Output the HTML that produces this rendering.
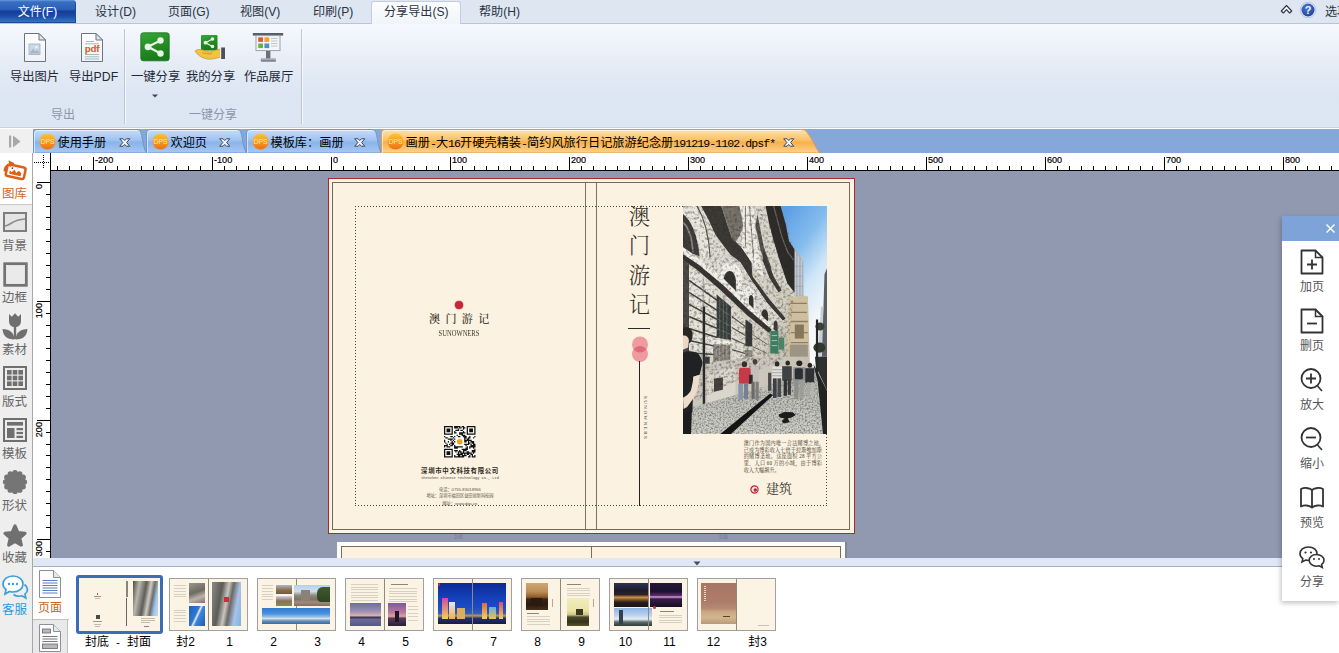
<!DOCTYPE html><html lang="zh"><head><meta charset="utf-8"><title>DPS</title><style>*{box-sizing:border-box;margin:0;padding:0}
html,body{width:1339px;height:653px;overflow:hidden;background:#fff}
body{position:relative;font-family:"Liberation Sans","Noto Sans CJK SC",sans-serif;font-size:12px;color:#1e2a3c}
.abs{position:absolute}
#menubar{position:absolute;left:0;top:0;width:1339px;height:24px;background:#dde6f1;border-bottom:1px solid #b9c4d4}
#filebtn{position:absolute;left:0;top:0;width:76px;height:23px;background:linear-gradient(#6a9ae0 0%,#3a70c4 8%,#2a5eb4 44%,#143e98 50%,#1a4aa4 72%,#3276c4 100%);border-radius:0 4px 0 0;border:1px solid #1c4a94;border-left:0;border-top:0;color:#fff;text-align:center;line-height:24px;font-size:12px}
.mi{position:absolute;top:0;height:23px;line-height:24.500px;font-size:12.1px;color:#2a3342;white-space:nowrap}
#acttab{position:absolute;left:371px;top:1px;width:90px;height:23px;background:linear-gradient(#fbfcfe,#f1f5fb);border:1px solid #c3cddc;border-bottom:0;border-radius:3px 3px 0 0}
#ribbon{position:absolute;left:0;top:24px;width:1339px;height:104px;background:linear-gradient(#f6f9fd 0%,#edf2fa 22%,#e1e9f4 50%,#dce5f2 72%,#dde6f3 100%);border-bottom:1px solid #c9d2e0}
.rsep{position:absolute;top:5px;width:1px;height:95px;background:#bcc5d3;box-shadow:1px 0 0 #f6f8fc}
.rlabel{position:absolute;font-size:12.3px;color:#1f2937;white-space:nowrap;line-height:14px}
.glabel{position:absolute;font-size:12px;color:#8b96a9;white-space:nowrap;line-height:14px}
#tabbar{position:absolute;left:0;top:129px;width:1339px;height:24px;background:#85a7d9}
#tabbar .lead{position:absolute;left:0;top:0;width:33px;height:24px;background:#f0f0f0}
.tab{position:absolute;top:0px;height:24px;font-size:12.2px;line-height:29px;color:#000;white-space:nowrap}
.tab svg.bg{position:absolute;left:0;top:0}
.tab .t{position:absolute;top:0px;left:24.500px}
.l{font-family:"Liberation Mono",monospace;font-size:11.500px;letter-spacing:-0.900px;position:relative;top:-0.5px}
#hruler{position:absolute;left:33px;top:153px;width:1306px;height:18px;background:#fff;overflow:hidden}
#hruler:after{content:'';position:absolute;left:17px;right:0;bottom:0;height:1px;background:#000}
#hruler .corner{position:absolute;left:0;top:0;width:18px;height:18px;border-right:1px solid #000}
#hruler i{position:absolute;bottom:1px;width:1px;background:#000}
#hruler i.m{height:4px}
#hruler i.M{height:13px}
#hruler b{position:absolute;top:1.5px;font-weight:normal;font-size:9.1px;line-height:10px;color:#000;-webkit-text-stroke:0.2px #000}
#vruler{position:absolute;left:33px;top:171px;width:18px;height:387px;background:#fff;border-right:1px solid #000;overflow:hidden}
#vruler i{position:absolute;right:0;height:1px;background:#000}
#vruler i.m{width:4px}
#vruler i.M{width:13px}
#vruler b{position:absolute;left:1px;font-weight:normal;font-size:9.1px;line-height:10px;color:#000;-webkit-text-stroke:0.2px #000;transform-origin:0 0;transform:rotate(-90deg) translate(-100%,0);white-space:nowrap}
#sidebar{position:absolute;left:0;top:153px;width:33px;height:500px;background:#eeeeee;border-right:1px solid #a8a8a8}
.sb{position:absolute;left:0;width:33px;height:52px}
.sb span{position:absolute;left:-1.500px;width:32px;text-align:center;font-size:12.5px;line-height:15px;color:#666;top:32px;letter-spacing:0}
.sb svg{position:absolute;left:2px;top:4px}
#canvas{position:absolute;left:51px;top:171px;width:1288px;height:387px;background:#9199b1;overflow:hidden}
#split{position:absolute;left:33px;top:558px;width:1306px;height:9px;background:#e0e8f7;border-bottom:1px solid #a9b0bb}
#bottom{position:absolute;left:33px;top:567px;width:1306px;height:86px;background:#fff}
.th{position:absolute;top:11px;width:79px;height:53px;background:#fbf3e4;border:1px solid #a0a0a0;overflow:hidden}
.thl{position:absolute;top:68px;font-size:12px;line-height:14px;color:#000;white-space:nowrap;transform:translateX(-50%)}
#panel{position:absolute;left:1282px;top:216px;width:57px;height:385px;background:#fff;box-shadow:-1px 2px 5px rgba(0,0,0,.25)}
#panel .hd{position:absolute;left:0;top:0;width:57px;height:24.500px;background:#7ea3d8}
.pi{position:absolute;left:1.500px;width:57px;text-align:center;font-size:12px;line-height:14px;color:#555}
.serif{font-family:"Liberation Serif","Noto Serif CJK SC",serif}
</style></head><body>
<div id="menubar">
<div id="filebtn">文件(F)</div>
<div class="mi" style="left:95px">设计(D)</div>
<div class="mi" style="left:168px">页面(G)</div>
<div class="mi" style="left:240px">视图(V)</div>
<div class="mi" style="left:313px">印刷(P)</div>
<div id="acttab"></div>
<div class="mi" style="left:384px">分享导出(S)</div>
<div class="mi" style="left:479px">帮助(H)</div>
<svg class="abs" style="left:1280px;top:4px" width="13" height="11" viewBox="0 0 13 11"><path d="M1.300 7 L6.500 1.500 L11.700 7 L9.700 9 L6.500 5.600 L3.300 9 Z" fill="#fff" stroke="#2e3444" stroke-width="1.100" stroke-linejoin="round"/></svg>
<svg class="abs" style="left:1299px;top:1px" width="18" height="18" viewBox="0 0 18 18"><defs><radialGradient id="hg" cx="0.400" cy="0.300" r="0.800"><stop offset="0" stop-color="#4a78cc"/><stop offset="1" stop-color="#1e3f96"/></radialGradient></defs><circle cx="9" cy="9" r="7.800" fill="#dfe8f6" stroke="#9db2d6" stroke-width="0.600"/><circle cx="9" cy="9" r="6.500" fill="url(#hg)"/><text x="9" y="13" font-size="11" font-weight="bold" fill="#eef4ff" text-anchor="middle" font-family="Liberation Sans, sans-serif">?</text></svg>
<div class="mi" style="left:1325px">选项</div>
</div>
<div id="ribbon">
<div class="rsep" style="left:124px"></div>
<div class="rsep" style="left:301px"></div>
<div class="rlabel" style="left:10px;top:46px">导出图片</div>
<div class="rlabel" style="left:69px;top:46px">导出PDF</div>
<div class="rlabel" style="left:131px;top:46px">一键分享</div>
<div class="rlabel" style="left:186px;top:46px">我的分享</div>
<div class="rlabel" style="left:244px;top:46px">作品展厅</div>
<svg class="abs" style="left:151px;top:69px" width="8" height="6"><path d="M1 1.5 H7 L4 4.5 Z" fill="#444"/></svg>
<div class="glabel" style="left:51px;top:84px">导出</div>
<div class="glabel" style="left:189px;top:84px">一键分享</div>
<svg class="abs" style="left:23px;top:8px" width="24" height="31" viewBox="0 0 24 31"><defs><linearGradient id="pg1" x1="0" y1="0" x2="0" y2="1"><stop offset="0" stop-color="#ffffff"/><stop offset="1" stop-color="#eef1f6"/></linearGradient></defs><path d="M1.500 1.500 H16 L22.500 8 V29.500 H1.500 Z" fill="url(#pg1)" stroke="#6d7580" stroke-width="1"/><path d="M16 1.500 V8 H22.500 Z" fill="#dfe7ef" stroke="#6d7580" stroke-width="1" stroke-linejoin="round"/><rect x="6" y="12" width="11" height="10.500" fill="#c9d9e6" stroke="#9fb0c0" stroke-width="0.800"/><path d="M6.500 21.500 L10 16.500 L12.500 19.500 L14.500 17.500 L16.500 21.500 Z" fill="#a6b8c6"/><circle cx="13.500" cy="15" r="1.200" fill="#eef4f8"/></svg>
<svg class="abs" style="left:80px;top:8px" width="24" height="31" viewBox="0 0 24 31"><path d="M1.500 1.500 H16 L22.500 8 V29.500 H1.500 Z" fill="url(#pg1)" stroke="#6d7580" stroke-width="1"/><path d="M16 1.500 V8 H22.500 Z" fill="#dfe7ef" stroke="#6d7580" stroke-width="1" stroke-linejoin="round"/><path d="M6 9.500 H14 M5 11.800 H19 M5 22.500 H19 M5 24.800 H19 M5 27 H19" stroke="#9db4b8" stroke-width="0.900"/><text x="12" y="20.300" font-family="Liberation Sans, sans-serif" font-weight="bold" font-size="9.800" fill="#e2531c" text-anchor="middle" letter-spacing="-0.200">pdf</text></svg>
<svg class="abs" style="left:140px;top:8px" width="30" height="30" viewBox="0 0 30 30"><defs><linearGradient id="gg1" x1="0" y1="0" x2="0.300" y2="1"><stop offset="0" stop-color="#38a838"/><stop offset="0.500" stop-color="#259025"/><stop offset="1" stop-color="#1b7a1b"/></linearGradient></defs><rect x="0.800" y="0.800" width="28.400" height="28" rx="2.500" fill="url(#gg1)" stroke="#1a6e1a" stroke-width="0.800"/><path d="M8 14.800 L20.500 8.500 M8 14.800 L20.500 21.500" stroke="#e6f4e6" stroke-width="2.200"/><circle cx="8" cy="14.800" r="3.400" fill="#e6f4e6"/><circle cx="20.500" cy="8.500" r="3.200" fill="#e6f4e6"/><circle cx="20.500" cy="21.500" r="3.200" fill="#e6f4e6"/></svg>
<svg class="abs" style="left:194px;top:10px" width="32" height="28" viewBox="0 0 32 28"><rect x="7" y="1" width="16.500" height="15.500" rx="1" fill="url(#gg1)"/><path d="M11.500 8.700 L18.500 5 M11.500 8.700 L18.500 12.500" stroke="#e6f4e6" stroke-width="1.300"/><circle cx="11.500" cy="8.700" r="1.900" fill="#e6f4e6"/><circle cx="18.500" cy="5" r="1.800" fill="#e6f4e6"/><circle cx="18.500" cy="12.500" r="1.800" fill="#e6f4e6"/><path d="M1 17 C3 15 7 15 10 16.500 L16 18 C19 17 23 15.500 27 15 V23 C22 24.500 17 25.500 13 25 C8 24 3 21 1 17 Z" fill="#f2c243" stroke="#c9952a" stroke-width="0.700"/><path d="M8 19 C11 19.500 15 20 18 19.500" stroke="#e39a1c" stroke-width="1.200" fill="none"/><rect x="27" y="13.500" width="4" height="11.500" fill="#4c4f58"/><rect x="26" y="14" width="1.200" height="10.500" fill="#e8e8ee"/></svg>
<svg class="abs" style="left:252px;top:8px" width="32" height="31" viewBox="0 0 32 31"><rect x="0.800" y="1" width="30.400" height="2.600" fill="#5a5f68"/><rect x="4" y="3.600" width="24" height="15" fill="#f4f6f9" stroke="#9aa0aa" stroke-width="1"/><rect x="6.200" y="5.300" width="4.800" height="4.600" fill="#d0603a"/><rect x="12.400" y="5.300" width="4.800" height="4.600" fill="#f0a030"/><rect x="6.200" y="11.500" width="4.800" height="4.600" fill="#6ab04a"/><rect x="12.400" y="11.500" width="4.800" height="4.600" fill="#4a90d8"/><path d="M19 6.500 H25.500 M19 9 H25.500 M19 11.500 H25.500 M19 14 H25.500" stroke="#b9c0ca" stroke-width="0.900"/><rect x="14" y="19" width="4.400" height="8" fill="#6a6f78"/><rect x="8.800" y="26.500" width="15.200" height="3.200" rx="1" fill="#7d828c"/><rect x="8.800" y="26.500" width="15.200" height="1.200" fill="#b9bec8"/></svg>

</div>

<div id="tabbar"><div class="lead"><svg class="abs" style="left:8px;top:6px" width="14" height="13" viewBox="0 0 14 13"><rect x="1" y="0.5" width="2.2" height="12" fill="#a8a8a8"/><path d="M5 0.5 L12.5 6.5 L5 12.5 Z" fill="#a8a8a8"/></svg></div><div class="tab" style="left:33px;width:114px"><svg class="bg" width="114" height="24"><defs><linearGradient id="tg1" x1="0" y1="0" x2="0" y2="1"><stop offset="0" stop-color="#c9defa"/><stop offset="0.45" stop-color="#9fc2f0"/><stop offset="0.55" stop-color="#8bb4ea"/><stop offset="1" stop-color="#a8c8f1"/></linearGradient></defs><path d="M0.5 24 V4 Q0.5 0.5 4 0.5 H105 C110 0.5 109 18 113.5 24 Z" fill="url(#tg1)" stroke="#6f96cf" stroke-width="1"/><path d="M1.5 24 V4.5 Q1.5 1.5 4.5 1.5 H104" fill="none" stroke="rgba(255,255,255,.55)" stroke-width="1"/></svg><svg class="abs" style="left:5.500px;top:4px" width="17" height="17" viewBox="0 0 17 17"><defs><linearGradient id="dg1" x1="0" y1="0" x2="0" y2="1"><stop offset="0" stop-color="#f9c733"/><stop offset="0.5" stop-color="#f59a22"/><stop offset="1" stop-color="#ee6f14"/></linearGradient></defs><circle cx="8.5" cy="8.5" r="8" fill="url(#dg1)"/><text x="8.5" y="10.6" font-size="6.8" fill="#ffeaa0" text-anchor="middle" font-family="Liberation Sans, sans-serif">DPS</text></svg><span class="t">使用手册</span><svg class="abs" style="left:86px;top:8.500px" width="11.500" height="9" viewBox="0 0 13 10"><path d="M0.800 0.800 H4.600 L6.500 2.800 L8.400 0.800 H12.200 L8.600 5 L12.200 9.200 H8.400 L6.500 7.200 L4.600 9.200 H0.800 L4.400 5 Z" fill="#f2f6fc" stroke="#34435e" stroke-width="1.100" stroke-linejoin="round"/></svg></div><div class="tab" style="left:146px;width:101px"><svg class="bg" width="101" height="24"><defs><linearGradient id="tg2" x1="0" y1="0" x2="0" y2="1"><stop offset="0" stop-color="#c9defa"/><stop offset="0.45" stop-color="#9fc2f0"/><stop offset="0.55" stop-color="#8bb4ea"/><stop offset="1" stop-color="#a8c8f1"/></linearGradient></defs><path d="M0.5 24 V4 Q0.5 0.5 4 0.5 H92 C97 0.5 96 18 100.5 24 Z" fill="url(#tg2)" stroke="#6f96cf" stroke-width="1"/><path d="M1.5 24 V4.5 Q1.5 1.5 4.5 1.5 H91" fill="none" stroke="rgba(255,255,255,.55)" stroke-width="1"/></svg><svg class="abs" style="left:5.500px;top:4px" width="17" height="17" viewBox="0 0 17 17"><defs><linearGradient id="dg2" x1="0" y1="0" x2="0" y2="1"><stop offset="0" stop-color="#f9c733"/><stop offset="0.5" stop-color="#f59a22"/><stop offset="1" stop-color="#ee6f14"/></linearGradient></defs><circle cx="8.5" cy="8.5" r="8" fill="url(#dg2)"/><text x="8.5" y="10.6" font-size="6.8" fill="#ffeaa0" text-anchor="middle" font-family="Liberation Sans, sans-serif">DPS</text></svg><span class="t">欢迎页</span><svg class="abs" style="left:73px;top:8.500px" width="11.500" height="9" viewBox="0 0 13 10"><path d="M0.800 0.800 H4.600 L6.500 2.800 L8.400 0.800 H12.200 L8.600 5 L12.200 9.200 H8.400 L6.500 7.200 L4.600 9.200 H0.800 L4.400 5 Z" fill="#f2f6fc" stroke="#34435e" stroke-width="1.100" stroke-linejoin="round"/></svg></div><div class="tab" style="left:246px;width:136px"><svg class="bg" width="136" height="24"><defs><linearGradient id="tg3" x1="0" y1="0" x2="0" y2="1"><stop offset="0" stop-color="#c9defa"/><stop offset="0.45" stop-color="#9fc2f0"/><stop offset="0.55" stop-color="#8bb4ea"/><stop offset="1" stop-color="#a8c8f1"/></linearGradient></defs><path d="M0.5 24 V4 Q0.5 0.5 4 0.5 H127 C132 0.5 131 18 135.5 24 Z" fill="url(#tg3)" stroke="#6f96cf" stroke-width="1"/><path d="M1.5 24 V4.5 Q1.5 1.5 4.5 1.5 H126" fill="none" stroke="rgba(255,255,255,.55)" stroke-width="1"/></svg><svg class="abs" style="left:5.500px;top:4px" width="17" height="17" viewBox="0 0 17 17"><defs><linearGradient id="dg3" x1="0" y1="0" x2="0" y2="1"><stop offset="0" stop-color="#f9c733"/><stop offset="0.5" stop-color="#f59a22"/><stop offset="1" stop-color="#ee6f14"/></linearGradient></defs><circle cx="8.5" cy="8.5" r="8" fill="url(#dg3)"/><text x="8.5" y="10.6" font-size="6.8" fill="#ffeaa0" text-anchor="middle" font-family="Liberation Sans, sans-serif">DPS</text></svg><span class="t">模板库：画册</span><svg class="abs" style="left:108px;top:8.500px" width="11.500" height="9" viewBox="0 0 13 10"><path d="M0.800 0.800 H4.600 L6.500 2.800 L8.400 0.800 H12.200 L8.600 5 L12.200 9.200 H8.400 L6.500 7.200 L4.600 9.200 H0.800 L4.400 5 Z" fill="#f2f6fc" stroke="#34435e" stroke-width="1.100" stroke-linejoin="round"/></svg></div><div class="tab" style="left:381px;width:439px"><svg class="bg" width="439" height="24"><defs><linearGradient id="tg4" x1="0" y1="0" x2="0" y2="1"><stop offset="0" stop-color="#fde2b4"/><stop offset="0.45" stop-color="#fbc068"/><stop offset="0.55" stop-color="#f9b04a"/><stop offset="1" stop-color="#fcd290"/></linearGradient></defs><path d="M0.5 24 V4 Q0.5 0.5 4 0.5 H422 C427 0.5 434 18 438.5 24 Z" fill="url(#tg4)" stroke="#d9a050" stroke-width="1"/><path d="M1.5 24 V4.5 Q1.5 1.5 4.5 1.5 H421" fill="none" stroke="rgba(255,255,255,.55)" stroke-width="1"/></svg><svg class="abs" style="left:5.500px;top:4px" width="17" height="17" viewBox="0 0 17 17"><defs><linearGradient id="dg4" x1="0" y1="0" x2="0" y2="1"><stop offset="0" stop-color="#f9c733"/><stop offset="0.5" stop-color="#f59a22"/><stop offset="1" stop-color="#ee6f14"/></linearGradient></defs><circle cx="8.5" cy="8.5" r="8" fill="url(#dg4)"/><text x="8.5" y="10.6" font-size="6.8" fill="#ffeaa0" text-anchor="middle" font-family="Liberation Sans, sans-serif">DPS</text></svg><span class="t">画册<span class="l">-</span>大<span class="l">16</span>开硬壳精装<span class="l">-</span>简约风旅行日记旅游纪念册<span class="l">191219-1102.dpsf*</span></span><svg class="abs" style="left:402px;top:8.500px" width="11.500" height="9" viewBox="0 0 13 10"><path d="M0.800 0.800 H4.600 L6.500 2.800 L8.400 0.800 H12.200 L8.600 5 L12.200 9.200 H8.400 L6.500 7.200 L4.600 9.200 H0.800 L4.400 5 Z" fill="#f2f6fc" stroke="#34435e" stroke-width="1.100" stroke-linejoin="round"/></svg></div></div>
<div id="hruler">
<div class="corner"><svg width="17" height="17"><path d="M1 9.5 H16 M10.5 2 V16" stroke="#000" stroke-width="1" stroke-dasharray="1 1" fill="none"/></svg></div>
<i class="m" style="left:24.3px"></i><i class="m" style="left:36.2px"></i><i class="m" style="left:48.1px"></i><i class="M" style="left:60.0px"></i><b style="left:62.0px">-200</b><i class="m" style="left:71.9px"></i><i class="m" style="left:83.8px"></i><i class="m" style="left:95.7px"></i><i class="m" style="left:107.6px"></i><i class="m" style="left:119.5px"></i><i class="m" style="left:131.4px"></i><i class="m" style="left:143.3px"></i><i class="m" style="left:155.2px"></i><i class="m" style="left:167.1px"></i><i class="M" style="left:179.0px"></i><b style="left:181.0px">-100</b><i class="m" style="left:190.9px"></i><i class="m" style="left:202.8px"></i><i class="m" style="left:214.7px"></i><i class="m" style="left:226.6px"></i><i class="m" style="left:238.5px"></i><i class="m" style="left:250.4px"></i><i class="m" style="left:262.3px"></i><i class="m" style="left:274.2px"></i><i class="m" style="left:286.1px"></i><i class="M" style="left:298.0px"></i><b style="left:300.0px">0</b><i class="m" style="left:309.9px"></i><i class="m" style="left:321.8px"></i><i class="m" style="left:333.7px"></i><i class="m" style="left:345.6px"></i><i class="m" style="left:357.5px"></i><i class="m" style="left:369.4px"></i><i class="m" style="left:381.3px"></i><i class="m" style="left:393.2px"></i><i class="m" style="left:405.1px"></i><i class="M" style="left:417.0px"></i><b style="left:419.0px">100</b><i class="m" style="left:428.9px"></i><i class="m" style="left:440.8px"></i><i class="m" style="left:452.7px"></i><i class="m" style="left:464.6px"></i><i class="m" style="left:476.5px"></i><i class="m" style="left:488.4px"></i><i class="m" style="left:500.3px"></i><i class="m" style="left:512.2px"></i><i class="m" style="left:524.1px"></i><i class="M" style="left:536.0px"></i><b style="left:538.0px">200</b><i class="m" style="left:547.9px"></i><i class="m" style="left:559.8px"></i><i class="m" style="left:571.7px"></i><i class="m" style="left:583.6px"></i><i class="m" style="left:595.5px"></i><i class="m" style="left:607.4px"></i><i class="m" style="left:619.3px"></i><i class="m" style="left:631.2px"></i><i class="m" style="left:643.1px"></i><i class="M" style="left:655.0px"></i><b style="left:657.0px">300</b><i class="m" style="left:666.9px"></i><i class="m" style="left:678.8px"></i><i class="m" style="left:690.7px"></i><i class="m" style="left:702.6px"></i><i class="m" style="left:714.5px"></i><i class="m" style="left:726.4px"></i><i class="m" style="left:738.3px"></i><i class="m" style="left:750.2px"></i><i class="m" style="left:762.1px"></i><i class="M" style="left:774.0px"></i><b style="left:776.0px">400</b><i class="m" style="left:785.9px"></i><i class="m" style="left:797.8px"></i><i class="m" style="left:809.7px"></i><i class="m" style="left:821.6px"></i><i class="m" style="left:833.5px"></i><i class="m" style="left:845.4px"></i><i class="m" style="left:857.3px"></i><i class="m" style="left:869.2px"></i><i class="m" style="left:881.1px"></i><i class="M" style="left:893.0px"></i><b style="left:895.0px">500</b><i class="m" style="left:904.9px"></i><i class="m" style="left:916.8px"></i><i class="m" style="left:928.7px"></i><i class="m" style="left:940.6px"></i><i class="m" style="left:952.5px"></i><i class="m" style="left:964.4px"></i><i class="m" style="left:976.3px"></i><i class="m" style="left:988.2px"></i><i class="m" style="left:1000.1px"></i><i class="M" style="left:1012.0px"></i><b style="left:1014.0px">600</b><i class="m" style="left:1023.9px"></i><i class="m" style="left:1035.8px"></i><i class="m" style="left:1047.7px"></i><i class="m" style="left:1059.6px"></i><i class="m" style="left:1071.5px"></i><i class="m" style="left:1083.4px"></i><i class="m" style="left:1095.3px"></i><i class="m" style="left:1107.2px"></i><i class="m" style="left:1119.1px"></i><i class="M" style="left:1131.0px"></i><b style="left:1133.0px">700</b><i class="m" style="left:1142.9px"></i><i class="m" style="left:1154.8px"></i><i class="m" style="left:1166.7px"></i><i class="m" style="left:1178.6px"></i><i class="m" style="left:1190.5px"></i><i class="m" style="left:1202.4px"></i><i class="m" style="left:1214.3px"></i><i class="m" style="left:1226.2px"></i><i class="m" style="left:1238.1px"></i><i class="M" style="left:1250.0px"></i><b style="left:1252.0px">800</b><i class="m" style="left:1261.9px"></i><i class="m" style="left:1273.8px"></i><i class="m" style="left:1285.7px"></i><i class="m" style="left:1297.6px"></i>
</div>
<div id="vruler">
<i class="M" style="top:10.7px"></i><b style="top:12.7px">0</b><i class="m" style="top:22.6px"></i><i class="m" style="top:34.5px"></i><i class="m" style="top:46.4px"></i><i class="m" style="top:58.3px"></i><i class="m" style="top:70.2px"></i><i class="m" style="top:82.1px"></i><i class="m" style="top:94.0px"></i><i class="m" style="top:105.9px"></i><i class="m" style="top:117.8px"></i><i class="M" style="top:129.7px"></i><b style="top:131.7px">100</b><i class="m" style="top:141.6px"></i><i class="m" style="top:153.5px"></i><i class="m" style="top:165.4px"></i><i class="m" style="top:177.3px"></i><i class="m" style="top:189.2px"></i><i class="m" style="top:201.1px"></i><i class="m" style="top:213.0px"></i><i class="m" style="top:224.9px"></i><i class="m" style="top:236.8px"></i><i class="M" style="top:248.7px"></i><b style="top:250.7px">200</b><i class="m" style="top:260.6px"></i><i class="m" style="top:272.5px"></i><i class="m" style="top:284.4px"></i><i class="m" style="top:296.3px"></i><i class="m" style="top:308.2px"></i><i class="m" style="top:320.1px"></i><i class="m" style="top:332.0px"></i><i class="m" style="top:343.9px"></i><i class="m" style="top:355.8px"></i><i class="M" style="top:367.7px"></i><b style="top:369.7px">300</b><i class="m" style="top:379.6px"></i>
</div>
<div id="sidebar">
<div class="sb" style="top:0;height:52px;width:32px;background:#fff;border-bottom:1px solid #c8c8c8">
<svg width="30" height="26" viewBox="0 0 30 26" style="left:1px;top:4px"><g transform="rotate(12 14.500 14.500)"><rect x="5.500" y="8.800" width="18.500" height="11.800" rx="2.200" fill="#fff" stroke="#dd5f18" stroke-width="2.500"/><path d="M8.800 18 V14.500 L11 16 L13.200 12.800 L15.400 15.800 L17.600 13 L20.500 15 V18 Z" fill="#dd5f18"/><circle cx="10.800" cy="11.800" r="0.900" fill="#7a3a14"/></g><path d="M3.800 14.500 C3.500 10.500 5.500 8.200 9 7.300" fill="none" stroke="#dd5f18" stroke-width="2.300"/><path d="M7.500 3.300 L13.600 6.300 L8.800 10.600 Z" fill="#dd5f18"/></svg>
<span style="color:#d9621e;top:34px">图库</span></div>
<div class="sb" style="top:52px">
<svg width="24" height="20" viewBox="0 0 24 20" style="left:3px;top:7px"><rect x="1" y="1" width="22" height="18" fill="#e4e4e4" stroke="#7d7d7d" stroke-width="2"/><path d="M2 14 C8 13.5 9 7.5 22 7" fill="none" stroke="#8a8a8a" stroke-width="1.6"/></svg>
<span style="top:34px">背景</span></div>
<div class="sb" style="top:104px">
<svg width="25" height="25" viewBox="0 0 25 25" style="left:2.500px;top:4.500px"><rect x="1.700" y="1.700" width="21.600" height="21.600" fill="#eaeaea" stroke="#737373" stroke-width="2.800"/><rect x="3.600" y="3.600" width="17.800" height="17.800" fill="none" stroke="#eaeaea" stroke-width="1.200" stroke-dasharray="1.200 1.600"/></svg>
<span style="top:34px">边框</span></div>
<div class="sb" style="top:156px">
<svg width="26" height="28" viewBox="0 0 26 28" style="left:2px;top:3px"><path d="M7 2 L9.800 4.800 L13 1.200 L16.200 4.800 L19 2 V9 C19 13 16.500 15 13 15 C9.500 15 7 13 7 9 Z" fill="#6f6f6f"/><rect x="11.800" y="14" width="2.400" height="13" fill="#6f6f6f"/><path d="M12.500 27.500 C4.500 27.500 1 23.500 0.500 17 C7.500 17 12 20.500 12.500 27.500 Z" fill="#6f6f6f"/><path d="M13.500 27.500 C21.500 27.500 25 23.500 25.500 17 C18.500 17 14 20.500 13.500 27.500 Z" fill="#6f6f6f"/></svg>
<span style="top:34px">素材</span></div>
<div class="sb" style="top:208px">
<svg width="24" height="24" viewBox="0 0 24 24" style="left:3px;top:4.500px"><rect x="1" y="1" width="22" height="22" fill="#ececec" stroke="#6f6f6f" stroke-width="2"/><g fill="#6f6f6f"><rect x="4" y="4" width="4.6" height="4.6"/><rect x="9.700" y="4" width="4.6" height="4.6"/><rect x="15.400" y="4" width="4.6" height="4.6"/><rect x="4" y="9.700" width="4.6" height="4.6"/><rect x="9.700" y="9.700" width="4.6" height="4.6"/><rect x="15.400" y="9.700" width="4.6" height="4.6"/><rect x="4" y="15.400" width="4.6" height="4.6"/><rect x="9.700" y="15.400" width="4.600" height="4.6"/><rect x="15.400" y="15.400" width="4.6" height="4.6"/></g></svg>
<span style="top:34px">版式</span></div>
<div class="sb" style="top:260px">
<svg width="24" height="24" viewBox="0 0 24 24" style="left:3px;top:5px"><rect x="1" y="1" width="22" height="22" fill="#ececec" stroke="#6f6f6f" stroke-width="2"/><g fill="#6f6f6f"><rect x="4" y="4" width="16" height="3.6"/><rect x="4" y="10" width="7.5" height="10"/><rect x="13.500" y="10" width="6.5" height="2.2"/><rect x="13.500" y="13.900" width="6.5" height="2.2"/><rect x="13.500" y="17.800" width="6.5" height="2.2"/></g></svg>
<span style="top:34px">模板</span></div>
<div class="sb" style="top:312px">
<svg width="26" height="26" viewBox="0 0 26 26" style="left:2px;top:4px"><g fill="#757575"><circle cx="13" cy="13" r="10.400"/><circle cx="22.40" cy="13.00" r="2.700"/><circle cx="21.14" cy="17.70" r="2.700"/><circle cx="17.70" cy="21.14" r="2.700"/><circle cx="13.00" cy="22.40" r="2.700"/><circle cx="8.30" cy="21.14" r="2.700"/><circle cx="4.86" cy="17.70" r="2.700"/><circle cx="3.60" cy="13.00" r="2.700"/><circle cx="4.86" cy="8.30" r="2.700"/><circle cx="8.30" cy="4.86" r="2.700"/><circle cx="13.00" cy="3.60" r="2.700"/><circle cx="17.70" cy="4.86" r="2.700"/><circle cx="21.14" cy="8.30" r="2.700"/></g></svg>
<span style="top:34px">形状</span></div>
<div class="sb" style="top:364px">
<svg width="26" height="25" viewBox="0 0 26 25" style="left:2px;top:6px"><path d="M13 3 L15.900 9.600 L23 10.300 L17.700 15 L19.300 22 L13 18.300 L6.700 22 L8.300 15 L3 10.300 L10.100 9.600 Z" fill="#707070" stroke="#707070" stroke-width="3.200" stroke-linejoin="round"/></svg>
<span style="top:34px">收藏</span></div>
<div class="sb" style="top:416px">
<svg width="28" height="26" viewBox="0 0 28 26" style="left:1px;top:4.500px"><path d="M12 2 C18 2 22 5.500 22 10 C22 14.500 18 18 12 18 C10.800 18 9.600 17.800 8.500 17.500 L4 20 L5 15.500 C3 14 2 12 2 10 C2 5.500 6 2 12 2 Z" fill="#fff" stroke="#3c9fd6" stroke-width="1.7"/><path d="M23.500 10.500 C25.500 12 26.500 13.800 26.500 15.500 C26.500 17.500 25.500 19 24 20.200 L24.800 24 L21 21.800 C18.500 22.500 15 22.300 12.500 20.500" fill="none" stroke="#3c9fd6" stroke-width="1.7"/><circle cx="8" cy="10" r="1.2" fill="#3c9fd6"/><circle cx="12" cy="10" r="1.2" fill="#3c9fd6"/><circle cx="16" cy="10" r="1.2" fill="#3c9fd6"/></svg>
<span style="color:#2d9ad6;top:34px">客服</span></div>
</div>

<div id="canvas">
<div id="page" class="abs" style="left:277px;top:7px;width:527px;height:356px;background:#fdf4e4;border:1px solid #a92c29">
<div class="abs" style="left:3px;top:3px;width:518px;height:348px;border:1px solid #6f6a5c;background:#fcf2e1"></div>
<div class="abs" style="left:256px;top:4px;width:12px;height:346px;border-left:1px solid #77726a;border-right:1px solid #77726a"></div>
<svg class="abs" style="left:25px;top:26px" width="476" height="303"><path d="M1 1.500 H473 M1 300.500 H473 M1.500 1 V301 M472.500 1 V301" fill="none" stroke="#454545" stroke-width="1" stroke-dasharray="1 2"/></svg>
<!-- back cover -->
<div class="abs" style="left:126px;top:121.500px;width:8px;height:8px;border-radius:50%;background:#c8243a;box-shadow:0 0 0 0.6px #e48a93"></div>
<div class="abs serif" style="left:100px;top:132px;width:62px;text-align:center;font-size:11px;letter-spacing:5.4px;line-height:16px;color:#2c2820;font-weight:500;white-space:nowrap">澳门游记</div>
<div class="abs" style="left:88.500px;top:150px;width:82px;text-align:center;font-family:'Liberation Serif',serif;font-size:8.2px;line-height:10px;color:#3c372d;transform:scaleX(0.8)">SUNOWNERS</div>
<svg class="abs" style="left:115px;top:247px" width="31.500" height="31.500" viewBox="0 0 32 32"><rect width="32" height="32" fill="#fffdf8"/><path d="M0.00 0.00h8.96v1.28h-8.96zM10.24 0.00h6.40v1.28h-6.40zM17.92 0.00h2.56v1.28h-2.56zM23.04 0.00h8.96v1.28h-8.96zM0.00 1.28h1.28v1.28h-1.28zM7.68 1.28h1.28v1.28h-1.28zM10.24 1.28h3.84v1.28h-3.84zM15.36 1.28h2.56v1.28h-2.56zM19.20 1.28h2.56v1.28h-2.56zM23.04 1.28h1.28v1.28h-1.28zM30.72 1.28h1.28v1.28h-1.28zM0.00 2.56h1.28v1.28h-1.28zM2.56 2.56h3.84v1.28h-3.84zM7.68 2.56h1.28v1.28h-1.28zM14.08 2.56h1.28v1.28h-1.28zM19.20 2.56h1.28v1.28h-1.28zM23.04 2.56h1.28v1.28h-1.28zM25.60 2.56h3.84v1.28h-3.84zM30.72 2.56h1.28v1.28h-1.28zM0.00 3.84h1.28v1.28h-1.28zM2.56 3.84h3.84v1.28h-3.84zM7.68 3.84h1.28v1.28h-1.28zM11.52 3.84h3.84v1.28h-3.84zM16.64 3.84h2.56v1.28h-2.56zM23.04 3.84h1.28v1.28h-1.28zM25.60 3.84h3.84v1.28h-3.84zM30.72 3.84h1.28v1.28h-1.28zM0.00 5.12h1.28v1.28h-1.28zM2.56 5.12h3.84v1.28h-3.84zM7.68 5.12h1.28v1.28h-1.28zM10.24 5.12h1.28v1.28h-1.28zM19.20 5.12h1.28v1.28h-1.28zM23.04 5.12h1.28v1.28h-1.28zM25.60 5.12h3.84v1.28h-3.84zM30.72 5.12h1.28v1.28h-1.28zM0.00 6.40h1.28v1.28h-1.28zM7.68 6.40h1.28v1.28h-1.28zM10.24 6.40h2.56v1.28h-2.56zM15.36 6.40h6.40v1.28h-6.40zM23.04 6.40h1.28v1.28h-1.28zM30.72 6.40h1.28v1.28h-1.28zM0.00 7.68h8.96v1.28h-8.96zM15.36 7.68h3.84v1.28h-3.84zM23.04 7.68h8.96v1.28h-8.96zM12.80 8.96h1.28v1.28h-1.28zM17.92 8.96h3.84v1.28h-3.84zM0.00 10.24h1.28v1.28h-1.28zM6.40 10.24h2.56v1.28h-2.56zM10.24 10.24h1.28v1.28h-1.28zM14.08 10.24h2.56v1.28h-2.56zM19.20 10.24h3.84v1.28h-3.84zM25.60 10.24h1.28v1.28h-1.28zM30.72 10.24h1.28v1.28h-1.28zM1.28 11.52h2.56v1.28h-2.56zM8.96 11.52h1.28v1.28h-1.28zM20.48 11.52h2.56v1.28h-2.56zM24.32 11.52h2.56v1.28h-2.56zM29.44 11.52h1.28v1.28h-1.28zM3.84 12.80h5.12v1.28h-5.12zM10.24 12.80h1.28v1.28h-1.28zM20.48 12.80h1.28v1.28h-1.28zM23.04 12.80h2.56v1.28h-2.56zM0.00 14.08h1.28v1.28h-1.28zM6.40 14.08h1.28v1.28h-1.28zM8.96 14.08h1.28v1.28h-1.28zM20.48 14.08h7.68v1.28h-7.68zM0.00 15.36h1.28v1.28h-1.28zM3.84 15.36h1.28v1.28h-1.28zM7.68 15.36h1.28v1.28h-1.28zM10.24 15.36h1.28v1.28h-1.28zM20.48 15.36h2.56v1.28h-2.56zM24.32 15.36h1.28v1.28h-1.28zM26.88 15.36h3.84v1.28h-3.84zM1.28 16.64h1.28v1.28h-1.28zM6.40 16.64h3.84v1.28h-3.84zM24.32 16.64h2.56v1.28h-2.56zM28.16 16.64h2.56v1.28h-2.56zM2.56 17.92h1.28v1.28h-1.28zM5.12 17.92h1.28v1.28h-1.28zM7.68 17.92h2.56v1.28h-2.56zM20.48 17.92h5.12v1.28h-5.12zM26.88 17.92h1.28v1.28h-1.28zM29.44 17.92h2.56v1.28h-2.56zM0.00 19.20h3.84v1.28h-3.84zM6.40 19.20h2.56v1.28h-2.56zM10.24 19.20h1.28v1.28h-1.28zM21.76 19.20h1.28v1.28h-1.28zM26.88 19.20h5.12v1.28h-5.12zM0.00 20.48h1.28v1.28h-1.28zM2.56 20.48h3.84v1.28h-3.84zM10.24 20.48h8.96v1.28h-8.96zM23.04 20.48h1.28v1.28h-1.28zM25.60 20.48h6.40v1.28h-6.40zM10.24 21.76h3.84v1.28h-3.84zM21.76 21.76h2.56v1.28h-2.56zM25.60 21.76h1.28v1.28h-1.28zM29.44 21.76h1.28v1.28h-1.28zM0.00 23.04h8.96v1.28h-8.96zM17.92 23.04h6.40v1.28h-6.40zM30.72 23.04h1.28v1.28h-1.28zM0.00 24.32h1.28v1.28h-1.28zM7.68 24.32h1.28v1.28h-1.28zM10.24 24.32h3.84v1.28h-3.84zM15.36 24.32h1.28v1.28h-1.28zM19.20 24.32h3.84v1.28h-3.84zM28.16 24.32h3.84v1.28h-3.84zM0.00 25.60h1.28v1.28h-1.28zM2.56 25.60h3.84v1.28h-3.84zM7.68 25.60h1.28v1.28h-1.28zM11.52 25.60h1.28v1.28h-1.28zM14.08 25.60h3.84v1.28h-3.84zM19.20 25.60h1.28v1.28h-1.28zM23.04 25.60h2.56v1.28h-2.56zM28.16 25.60h3.84v1.28h-3.84zM0.00 26.88h1.28v1.28h-1.28zM2.56 26.88h3.84v1.28h-3.84zM7.68 26.88h1.28v1.28h-1.28zM14.08 26.88h1.28v1.28h-1.28zM16.64 26.88h11.52v1.28h-11.52zM29.44 26.88h1.28v1.28h-1.28zM0.00 28.16h1.28v1.28h-1.28zM2.56 28.16h3.84v1.28h-3.84zM7.68 28.16h1.28v1.28h-1.28zM12.80 28.16h6.40v1.28h-6.40zM20.48 28.16h1.28v1.28h-1.28zM23.04 28.16h2.56v1.28h-2.56zM26.88 28.16h2.56v1.28h-2.56zM0.00 29.44h1.28v1.28h-1.28zM7.68 29.44h1.28v1.28h-1.28zM10.24 29.44h1.28v1.28h-1.28zM14.08 29.44h2.56v1.28h-2.56zM17.92 29.44h5.12v1.28h-5.12zM25.60 29.44h1.28v1.28h-1.28zM28.16 29.44h1.28v1.28h-1.28zM30.72 29.44h1.28v1.28h-1.28zM0.00 30.72h8.96v1.28h-8.96zM10.24 30.72h10.24v1.28h-10.24zM24.32 30.72h2.56v1.28h-2.56zM28.16 30.72h3.84v1.28h-3.84z" fill="#111"/><circle cx="16" cy="16" r="2.800" fill="#f0a020"/></svg>
<div class="abs" style="left:81px;top:287px;width:100px;text-align:center;font-size:6.4px;font-weight:bold;line-height:9px;color:#2e2a22;letter-spacing:0.680px;white-space:nowrap">深圳市中文科技有限公司</div>
<div class="abs" style="left:81px;top:296px;width:100px;text-align:center;font-family:'Liberation Mono',monospace;font-size:3.6px;line-height:6px;color:#4a4438;white-space:nowrap">Shenzhen Chinese Technology Co., Ltd</div>
<div class="abs" style="left:81px;top:307.500px;width:100px;text-align:center;font-size:4.2px;line-height:6px;color:#5a5448;white-space:nowrap">电话：0755-83018966</div>
<div class="abs" style="left:81px;top:314px;width:100px;text-align:center;font-size:4.2px;line-height:6px;color:#5a5448;white-space:nowrap">地址：深圳市福田区益田创新科技园</div>
<div class="abs" style="left:81px;top:321.500px;width:100px;text-align:center;font-size:4.2px;line-height:6px;color:#5a5448;white-space:nowrap">网址：www.dps.cn</div>
<!-- front cover -->
<div class="abs serif" style="left:298.500px;top:24px;width:24px;text-align:center;font-size:21.300px;font-weight:300;line-height:29.400px;color:#2e2a24">澳<br>门<br>游<br>记</div>
<div class="abs" style="left:299px;top:149px;width:22px;height:1px;background:#2a2a2a"></div>
<svg class="abs" style="left:300.500px;top:155.500px" width="20" height="30" viewBox="0 0 20 30"><circle cx="10" cy="9.500" r="8" fill="#ee9a9f"/><circle cx="10" cy="19" r="8" fill="#ee9a9f"/><path d="M3.600 14.250 A8 8 0 0 1 16.400 14.250 A8 8 0 0 1 3.600 14.250 Z" fill="#e0697a"/></svg>
<div class="abs" style="left:310px;top:182px;width:1px;height:145px;background:#262320"></div>
<div class="abs" style="left:312px;top:216.500px;width:8px;height:46px"><div style="position:absolute;left:0;top:0;transform-origin:0 0;transform:rotate(90deg) translate(0,-100%);font-family:'Liberation Serif',serif;font-size:4.900px;line-height:8px;letter-spacing:1.550px;color:#3a362e;white-space:nowrap">SUNOWNERS</div></div>
<svg class="abs" style="left:354px;top:27px" width="144" height="228" viewBox="0 0 143 227" preserveAspectRatio="none">
<defs>
<linearGradient id="sky" x1="0.200" y1="0" x2="0.600" y2="1"><stop offset="0" stop-color="#5e9fe4"/><stop offset="0.300" stop-color="#84bcee"/><stop offset="0.550" stop-color="#cfe6f7"/><stop offset="0.800" stop-color="#f2f7fa"/><stop offset="1" stop-color="#f8fafa"/></linearGradient>
<linearGradient id="stone" x1="0" y1="0" x2="1" y2="0.700"><stop offset="0" stop-color="#e4e1d8"/><stop offset="0.600" stop-color="#d6d2c6"/><stop offset="1" stop-color="#bdb7aa"/></linearGradient>
<linearGradient id="pave" x1="0" y1="0" x2="0" y2="1"><stop offset="0" stop-color="#b4b4ae"/><stop offset="1" stop-color="#d0d0ca"/></linearGradient>
<filter id="grain2" x="0" y="0" width="1" height="1"><feTurbulence type="fractalNoise" baseFrequency="0.600" numOctaves="2" seed="8" result="n"/><feColorMatrix in="n" type="matrix" values="0 0 0 0 0  0 0 0 0 0  0 0 0 0 0  1.500 0 0 0 -0.600" result="a"/><feComposite in="SourceGraphic" in2="a" operator="in"/></filter>
<filter id="grain" x="0" y="0" width="1" height="1"><feTurbulence type="fractalNoise" baseFrequency="0.350" numOctaves="3" seed="5" result="n"/><feColorMatrix in="n" type="matrix" values="0 0 0 0 0  0 0 0 0 0  0 0 0 0 0  2.200 0 0 0 -1" result="a"/><feComposite in="SourceGraphic" in2="a" operator="in"/></filter>
<clipPath id="pc"><rect width="143" height="227"/></clipPath>
</defs>
<g clip-path="url(#pc)">
<rect width="143" height="227" fill="url(#stone)"/>
<!-- sky -->
<path d="M97 0 H143 V160 H126 L124.600 113 L124 90 L119.600 89 L119 52 L110.700 43 L105.400 35 L102 18 Z" fill="url(#sky)"/>
<!-- glass tower -->
<path d="M108 38 L117 50 L119.600 56 V90 H109 Z" fill="#aab3bd"/>
<path d="M111.500 46 V89 M114.500 50 V89 M117.500 54 V89" stroke="#d3dae1" stroke-width="0.700"/>
<path d="M109 60 H119 M109 70 H119 M109 80 H119" stroke="#8c96a2" stroke-width="0.500"/>
<!-- distant beige building -->
<path d="M105 90 H124 L125.500 150 H103 Z" fill="#cdbf9f"/>
<path d="M107 97 H123 M107 106 H123 M107 115 H124 M107 126 H124 M107 136 H124" stroke="#8e7f63" stroke-width="1.300"/>
<rect x="111" y="118" width="9" height="14" fill="#85765c"/>
<rect x="106" y="138" width="18" height="12" fill="#9c9484"/>
<!-- right dark building + tree + plants -->
<path d="M143 62 L140.500 68 L139.500 100 L138 128 L137 150 L143 150 Z" fill="#5a5e66"/>
<path d="M137 100 L139.500 100 L138 150 L134 150 Z" fill="#c9cdd2"/>
<ellipse cx="135.500" cy="141" rx="6" ry="5" fill="#2f3a2c"/>
<ellipse cx="136" cy="120" rx="4.500" ry="4" fill="#3a403a"/>
<path d="M131 150 H143 V184 L132 160 Z" fill="#2d302f"/>
<!-- dark under-cornice band 1 -->
<path d="M18 0 H38 L48.500 32 L58 41 L68 56 L69 70 L86 93 L102 112 L99 114 L84 97 L68 74 L57 56 L47 48.500 L32.500 29 L25 13 Z" fill="#3c3a37"/>
<path d="M38 0 H58 L62 14 L56 30 L52 36 L48.500 32 Z" fill="#77736b"/>
<!-- pilasters light -->
<path d="M56 0 H70 L74 40 L80 70 L74 66 L68 56 L58 41 L60 20 Z" fill="#efede6"/>
<path d="M62 0 V40 M66 0 L70 50" stroke="#8a867d" stroke-width="1"/>
<path d="M70 0 H82 L85 15 L89 32 L96 56 L104 77 L110.700 86 V92 L100 80 L92 64 L84 40 L76 20 Z" fill="#d9d6cc"/>
<path d="M74 8 L80 40 L88 62 L84 64 L77 44 L72 20 Z" fill="#55534f"/>
<path d="M80 44 L90 70 L98 84 L95 86 L86 72 L79 54 Z" fill="#3f3d3a"/>
<!-- roof cornice black -->
<path d="M82 0 H97 L102 18 L105.400 35 L110.700 43 V86 L103.600 77 L96.500 56 L89.400 32.500 L85 15 Z" fill="#2e2c2a"/>
<path d="M90 0 L98 30 L104 46 L110 54" stroke="#6b675f" stroke-width="1.200" fill="none"/>
<!-- left arch -->
<path d="M0 0 H14 C22 14 26 30 27 52 L17 50 C15 32 10 18 0 8 Z" fill="#e9e6de"/>
<path d="M0 8 C8 14 14 28 16.500 50 L8 47 L0 41 Z" fill="#403e3c"/>
<path d="M0 16 C6 22 9 32 10 46" stroke="#8d8a84" stroke-width="1.600" fill="none"/>
<path d="M14 0 C22 14 26 30 27 52" stroke="#5a5853" stroke-width="1.200" fill="none"/>
<!-- facade mid (between band1 & ledge) -->
<path d="M27 52 L32 30 L47 48.500 L57 56 L68 74 L84 97 L99 114 L90 120 L68 100 L41 75 Z" fill="#dedbd2"/>
<!-- arch window 1 with surround -->
<path d="M36 70 C38 54 52 52 58 66 L60 90 L54 86 L53 72 C50 62 43 62 41 72 Z" fill="#f3f1eb"/>
<path d="M40 74 C42 61 51 62 52.500 74 L52.500 86 L40 78 Z" fill="#353432"/>
<path d="M60 86 C62 78 68 78 71 86 L72 104 L65 100 Z" fill="#f0eee8"/>
<path d="M65.400 92 C66.500 87 69.500 88 70 93 V104 L65.400 100 Z" fill="#353432"/>
<path d="M78 106 C80 101 84 103 84.500 108 V118 L78 113 Z" fill="#353432"/>
<path d="M90 116 C91.500 113 94 114 94 118 V126 L90 123 Z" fill="#3f3d3a"/>
<!-- lower ledge -->
<path d="M0 41 L16 52 L41 73 L68 100 L90 120 L88 123 L66 104 L40 79 L15 58 L0 48 Z" fill="#f2f0ea"/>
<path d="M0 48 L15 58 L40 79 L66 104 L88 123 L86 127 L64 109 L38 84.500 L14 63.500 L0 54 Z" fill="#383633"/>
<!-- far left dark strip -->
<path d="M0 54 L6 58 V150 L0 150 Z" fill="#4b4a48"/>
<!-- rusticated blocks -->
<path d="M6 62 L34 84 V150 L6 160 Z" fill="#e6e3da"/>
<path d="M6 74 L34 94 M6 86 L34 104 M6 98 L34 113 M6 110 L34 122 M6 122 L34 131 M6 134 L34 140 M6 146 L34 148" stroke="#46433f" stroke-width="1.500"/>
<path d="M20 72 V160 " stroke="#8c8982" stroke-width="0.800"/>
<!-- windows with grills -->
<path d="M33.400 88 L47.600 100 V133.400 L33.400 131 Z" fill="#39403d"/>
<path d="M36.500 91 V131 M40 94 V132 M43.500 97 V133 M33.400 100 L47.600 110 M33.400 112 L47.600 120 M33.400 122 L47.600 128" stroke="#7f8782" stroke-width="0.600"/>
<path d="M30 133 L49 135 V138 L30 137 Z" fill="#f0eee8"/>
<path d="M30 137.500 L46.800 139 V155.600 L30 157 Z" fill="#86837b"/>
<path d="M33 138 V157 M36.500 138 V157 M40 138.500 V156.500 M43.500 139 V156" stroke="#b9b6ad" stroke-width="0.600"/>
<!-- column blocks between windows -->
<path d="M48.500 100 L62 112 V165 L48.500 170 Z" fill="#e0ddd3"/>
<path d="M48.500 110 L62 120 M48.500 121 L62 129 M48.500 132 L62 138 M48.500 143 L62 147 M48.500 154 L62 156" stroke="#5a5752" stroke-width="1.100"/>
<path d="M62 113 L69 118 V140 L62 139.600 Z" fill="#383b39"/>
<path d="M61.500 143 L69 143.500 V152 L61.500 152 Z" fill="#8f8c84"/>
<path d="M69 116 L84 128 V160 L69 165 Z" fill="#d5d1c6"/>
<path d="M69 128 L84 138 M69 140 L84 147 M69 152 L84 155" stroke="#6a6761" stroke-width="0.900"/>
<path d="M84 126 L103 126 V160 L84 166 Z" fill="#c2bdb0"/>
<!-- building base -->
<path d="M6 158 L103 146 V176 L20 204 L6 204 Z" fill="#cbc7bc"/>
<path d="M24 166 L52 160 V188 L24 198 Z" fill="#dad6cc"/>
<path d="M30.800 172 L39.600 170.500 V183 L30.800 185 Z" fill="#45433f"/>
<!-- facade grain -->
<path d="M0 0 H97 L110 43 V90 L104 150 L0 200 Z" fill="#24231f" filter="url(#grain)" opacity="0.550"/>
<!-- lamp post -->
<rect x="19.600" y="100" width="2.400" height="102" fill="#2a2a2a"/>
<path d="M21 150 h5.500 v7 h-5.500 z" fill="#3a3a3a"/>
<!-- green sign -->
<rect x="86.700" y="124.500" width="8" height="22.300" fill="#3d7c60"/>
<rect x="95" y="131" width="5.500" height="12" fill="#4a8468"/>
<path d="M88 129 H93.500 M88 134 H93.500 M88 139 H93.500" stroke="#b8d8c8" stroke-width="0.800"/>
<!-- pavement -->
<path d="M0 206 L9 200 L50 189 L86 178 L120 168 L132 160 L143 184 V227 H0 Z" fill="url(#pave)"/>
<path d="M0 206 L9 200 L50 189 L86 178 L120 168 L132 160 L143 184 V227 H0 Z" fill="#4e4e48" filter="url(#grain2)"/>
<!-- black stripe -->
<path d="M37 227 L47.600 227 L89.400 188.500 L86.700 186.700 Z" fill="#141414"/>
<!-- bird shadow -->
<path d="M95 207.500 L101 205 L109 205.300 L112 208 L108 210.500 L104 211.500 L106 215 L100 216.500 L98 214 L101 211.500 L96 210.500 Z" fill="#1c1c1c"/>
<!-- fence right -->
<path d="M129.400 157 L143 184 V227 H139 L133.800 175 Z" fill="#222423"/>
<rect x="132" y="113" width="2.200" height="53" fill="#252626"/>
<!-- crowd -->
<g>
<ellipse cx="61" cy="157.500" rx="2.700" ry="2.900" fill="#3a2f2a"/><path d="M55.600 163 Q55.600 161 58 161 H65 Q67.200 161 67.200 163 V177 H55.600 Z" fill="#c63a47"/><rect x="55" y="177" width="4.500" height="16" fill="#8a94a6"/><rect x="60.500" y="177" width="4.200" height="15" fill="#768091"/>
<ellipse cx="71.500" cy="155" rx="2.300" ry="2.700" fill="#4a3d36"/><path d="M67.500 160 H75.200 V176 H67.500 Z" fill="#c4bfba"/><rect x="65.600" y="168" width="3.600" height="9" fill="#2c2c2e"/><rect x="68" y="175" width="3.200" height="17" fill="#6a6a6a"/><rect x="72" y="175" width="3.200" height="18" fill="#7c7c7a"/>
<rect x="78.500" y="158" width="6" height="26" fill="#c9c6bd" opacity="0.800"/>
<rect x="84.500" y="166" width="3.200" height="18" fill="#4a4a4a"/>
<ellipse cx="93.400" cy="157.200" rx="2.300" ry="2.600" fill="#2e2a28"/><path d="M88.500 160 H98.300 V172 H88.500 Z" fill="#e2e0dc"/><path d="M88.500 163 H98.300 M88.500 166 H98.300 M88.500 169 H98.300" stroke="#8e8e92" stroke-width="0.700"/><rect x="89.400" y="171.600" width="3.600" height="19.500" fill="#3e3f43"/><rect x="93.800" y="171.600" width="3.600" height="18.500" fill="#4a4b50"/>
<ellipse cx="104" cy="156.200" rx="2.300" ry="2.500" fill="#2a2624"/><path d="M98.500 159.500 H108 V174 H98.500 Z" fill="#404144"/><rect x="100" y="173" width="3.200" height="16" fill="#2f3033"/><rect x="104" y="173" width="3.200" height="15" fill="#3a3b3e"/>
<ellipse cx="115.500" cy="156.500" rx="3" ry="2.800" fill="#25221f"/><path d="M109.500 160.500 H121.400 V174 H109.500 Z" fill="#8b8d8f"/><rect x="111" y="161.500" width="8" height="11" rx="1.500" fill="#2c2e31"/><rect x="110.500" y="173.500" width="4.200" height="18.500" fill="#8f8f8a"/><rect x="115.600" y="173.500" width="4.200" height="17.500" fill="#9c9c98"/>
<ellipse cx="126" cy="158.500" rx="2.300" ry="2.500" fill="#262320"/><path d="M121.400 161.500 H130.300 V176 H121.400 Z" fill="#2f3134"/><rect x="123" y="175.500" width="3" height="15" fill="#a9a9a4"/><rect x="126.800" y="175.500" width="3" height="14.500" fill="#b4b4b0"/>
</g>
<!-- left man -->
<path d="M0 121 C5 119 9.400 122 9.600 128 C9.400 133 8 136 6 137 L0 132 Z" fill="#2a2623"/>
<path d="M0 129 C3 128.500 5.500 130 5.900 134 L5 141 L0 143 Z" fill="#ead7c6"/>
<path d="M0 146 C6 143.500 12 144.500 14.800 146.800 C18 150 19.500 154 19.200 157.400 L16.500 168 L10.300 170 L9.400 205.400 L0 205.400 Z" fill="#202122"/>
<path d="M10.300 170 L16.500 168 C16 176 15 180 13.900 184 C11 191 7.500 196 4.100 200 L0.500 202 L0 191 C3.500 189 6 187 7.700 184 C9 179 10 175 10.300 170 Z" fill="#eddccb"/>
<path d="M0 205 L8.800 204.500 L8 227 H0 Z" fill="#1b1c1e"/>
</g>
</svg>

<div class="abs serif" style="left:414.700px;top:261px;width:80.5px;height:6.800px;font-size:5.150px;line-height:6.800px;color:#3f3a30;white-space:nowrap;text-align:justify;text-align-last:justify;">澳门作为国内唯一合法赌博之地，</div><div class="abs serif" style="left:414.700px;top:268px;width:78.3px;height:6.800px;font-size:5.150px;line-height:6.800px;color:#3f3a30;white-space:nowrap;text-align:justify;text-align-last:justify;">已成为博彩收入七倍于拉斯维加斯</div><div class="abs serif" style="left:414.700px;top:274px;width:78.3px;height:6.800px;font-size:5.150px;line-height:6.800px;color:#3f3a30;white-space:nowrap;text-align:justify;text-align-last:justify;">的赌博圣地。这座面积 28 平方公</div><div class="abs serif" style="left:414.700px;top:281px;width:78.3px;height:6.800px;font-size:5.150px;line-height:6.800px;color:#3f3a30;white-space:nowrap;text-align:justify;text-align-last:justify;">里、人口 60 万的小城，由于博彩</div><div class="abs serif" style="left:414.700px;top:288px;width:78.3px;height:6.800px;font-size:5.150px;line-height:6.800px;color:#3f3a30;white-space:nowrap;">收入大幅飙升。</div>
<svg class="abs" style="left:421px;top:306px" width="9" height="9" viewBox="0 0 9 9"><circle cx="4.500" cy="4.500" r="3.600" fill="#f7e6dc" stroke="#c2213a" stroke-width="1.200"/><circle cx="5.300" cy="5" r="1.700" fill="#c2213a"/></svg>
<div class="abs serif" style="left:437px;top:301.500px;font-size:13px;line-height:16px;color:#3a362e;white-space:nowrap">建筑</div>
</div>
<!-- page labels -->
<div class="abs" style="left:403px;top:362.500px;font-size:4.500px;line-height:6px;color:#6e7890;white-space:nowrap">封底</div>
<div class="abs" style="left:668px;top:362.500px;font-size:4.500px;line-height:6px;color:#6e7890;white-space:nowrap">封面</div>
<!-- second page -->
<div class="abs" style="left:286px;top:371px;width:508px;height:20px;background:#fffdf8;box-shadow:2px 0 0 #7f8595">
<div class="abs" style="left:4px;top:3.500px;width:500px;height:20px;border:1px solid #77705f;background:#fdf2df"></div>
<div class="abs" style="left:253.500px;top:4px;width:1px;height:20px;background:#77705f"></div>
</div>
</div>

<div id="split"><svg class="abs" style="left:660px;top:3px" width="8" height="5"><path d="M0.5 0.5 H7.5 L4 4.5 Z" fill="#4a4f5a"/></svg></div><div id="bottom"><div class="abs" style="left:0;top:0;width:35px;height:86px;background:#e9e9e9;border-right:1px solid #c2c2c2"></div><div class="abs" style="left:0;top:0;width:36px;height:53px;background:#fff;border-bottom:1px solid #c2c2c2"></div><svg class="abs" style="left:6px;top:3px" width="22" height="28" viewBox="0 0 22 28"><path d="M0.5 0.5 H14.5 L21.5 7.5 V27.5 H0.5 Z" fill="#fdfdfd" stroke="#8a8f98" stroke-width="1"/><path d="M14.5 0.5 V7.5 H21.5" fill="#e4e7ec" stroke="#8a8f98" stroke-width="1"/><path d="M3.500 10.500 H18.500 M3.500 13 H18.500 M3.500 15.500 H18.500 M3.500 18 H18.500 M3.500 20.500 H18.500 M3.500 23 H18.500" stroke="#5c7fc0" stroke-width="1.100"/></svg><div class="abs" style="left:-0.500px;top:34px;width:35px;text-align:center;font-size:12px;line-height:14px;color:#c8641e">页面</div><svg class="abs" style="left:6px;top:57px" width="22" height="28" viewBox="0 0 22 28"><path d="M0.5 0.5 H14.5 L21.5 7.5 V27.5 H0.5 Z" fill="#fdfdfd" stroke="#8a8f98" stroke-width="1"/><path d="M14.5 0.5 V7.5 H21.5" fill="#e4e7ec" stroke="#8a8f98" stroke-width="1"/><rect x="3.500" y="5" width="8" height="4" fill="#b8b8b8" stroke="#666" stroke-width="0.800"/><path d="M3.500 12.500 H18.500 M3.500 15 H18.500 M3.500 17.500 H18.500" stroke="#777" stroke-width="1.100"/><rect x="3.500" y="20" width="15" height="4.500" fill="#b8b8b8" stroke="#666" stroke-width="0.800"/></svg><div class="abs" style="left:43px;top:8px;width:87px;height:59px;border:3px solid #3b6cba;border-radius:3px;background:#fbf3e4;overflow:hidden"><i style="position:absolute;left:66.5%;top:5.0%;width:30.5%;height:66.0%;background:linear-gradient(100deg,#4a4845 0%,#b9b6ae 22%,#5f5d59 45%,#cfcbc2 60%,#6e6c68 72%,#9cc2ea 84%,#c5dcf2 100%);"></i><i style="position:absolute;left:57.5%;top:6.0%;width:2.6%;height:30.0%;background:#8a857c;"></i><i style="position:absolute;left:58.6%;top:38.0%;width:0.7%;height:52.0%;background:#6a655e;"></i><i style="position:absolute;left:19.0%;top:34.0%;width:8.0%;height:2.2%;background:#9a9386;"></i><i style="position:absolute;left:22.2%;top:29.0%;width:1.8%;height:3.0%;background:#c8243a;border-radius:50%"></i><i style="position:absolute;left:20.0%;top:38.0%;width:6.0%;height:1.2%;background:#c2bbae;"></i><i style="position:absolute;left:20.5%;top:70.0%;width:5.0%;height:8.0%;background:#4a4a46;"></i><i style="position:absolute;left:17.0%;top:81.0%;width:12.0%;height:1.8%;background:#9a9386;"></i><i style="position:absolute;left:18.5%;top:86.0%;width:9.0%;height:1.2%;background:#c2bbae;"></i><i style="position:absolute;left:19.5%;top:90.0%;width:7.0%;height:1.2%;background:#c2bbae;"></i><i style="position:absolute;left:76.0%;top:75.0%;width:18.0%;height:1.4%;background:#c2bbae;"></i><i style="position:absolute;left:76.0%;top:79.0%;width:18.0%;height:1.4%;background:#c2bbae;"></i><i style="position:absolute;left:76.0%;top:83.0%;width:12.0%;height:1.4%;background:#c2bbae;"></i><i style="position:absolute;left:80.0%;top:90.0%;width:7.0%;height:3.0%;background:#8a8376;"></i></div><div class="thl" style="left:85px;top:68px;font-size:12px">封底<span class="l" style="font-size:10px;letter-spacing:0;white-space:pre"> - </span>封面</div><div class="th" style="left:136px"><i style="position:absolute;left:49.6%;top:0.0%;width:0.9%;height:100.0%;background:#8f8a80;"></i><i style="position:absolute;left:5.0%;top:12.0%;width:16.0%;height:1.6%;background:#d8d1c3;"></i><i style="position:absolute;left:5.0%;top:17.5%;width:16.0%;height:1.6%;background:#d8d1c3;"></i><i style="position:absolute;left:5.0%;top:23.0%;width:16.0%;height:1.6%;background:#d8d1c3;"></i><i style="position:absolute;left:5.0%;top:28.5%;width:16.0%;height:1.6%;background:#d8d1c3;"></i><i style="position:absolute;left:5.0%;top:34.0%;width:16.0%;height:1.6%;background:#d8d1c3;"></i><i style="position:absolute;left:5.0%;top:60.0%;width:16.0%;height:1.6%;background:#d8d1c3;"></i><i style="position:absolute;left:5.0%;top:65.5%;width:16.0%;height:1.6%;background:#d8d1c3;"></i><i style="position:absolute;left:5.0%;top:71.0%;width:16.0%;height:1.6%;background:#d8d1c3;"></i><i style="position:absolute;left:5.0%;top:76.5%;width:16.0%;height:1.6%;background:#d8d1c3;"></i><i style="position:absolute;left:5.0%;top:82.0%;width:16.0%;height:1.6%;background:#d8d1c3;"></i><i style="position:absolute;left:24.5%;top:7.0%;width:20.5%;height:40.0%;background:linear-gradient(160deg,#9a958c 0%,#6e6a63 45%,#b9b4aa 70%,#7c7469 100%);"></i><i style="position:absolute;left:24.5%;top:52.0%;width:20.5%;height:40.0%;background:linear-gradient(115deg,#1f5fb8 0%,#2f78d2 42%,#e8eef6 50%,#3d86da 58%,#1c5ab4 100%);"></i><i style="position:absolute;left:55.0%;top:6.0%;width:37.5%;height:87.0%;background:linear-gradient(100deg,#8d8a84 0%,#5d5b57 30%,#c9c6bf 48%,#6a6864 60%,#a6c4e6 78%,#7fb0e6 100%);"></i><i style="position:absolute;left:70.0%;top:36.0%;width:6.0%;height:9.0%;background:#d6283a;"></i></div><div class="thl" style="left:152.5px">封2</div><div class="thl" style="left:196.5px">1</div><div class="th" style="left:224px"><i style="position:absolute;left:49.6%;top:0.0%;width:0.9%;height:100.0%;background:#8f8a80;"></i><i style="position:absolute;left:5.0%;top:12.0%;width:15.0%;height:1.6%;background:#d8d1c3;"></i><i style="position:absolute;left:5.0%;top:17.5%;width:15.0%;height:1.6%;background:#d8d1c3;"></i><i style="position:absolute;left:5.0%;top:23.0%;width:15.0%;height:1.6%;background:#d8d1c3;"></i><i style="position:absolute;left:5.0%;top:28.5%;width:15.0%;height:1.6%;background:#d8d1c3;"></i><i style="position:absolute;left:5.0%;top:34.0%;width:15.0%;height:1.6%;background:#d8d1c3;"></i><i style="position:absolute;left:5.0%;top:39.5%;width:15.0%;height:1.6%;background:#d8d1c3;"></i><i style="position:absolute;left:24.0%;top:11.0%;width:20.5%;height:19.0%;background:linear-gradient(#a9b8c9,#8c6f4e 55%,#6e5a43);"></i><i style="position:absolute;left:24.0%;top:33.0%;width:20.5%;height:19.0%;background:linear-gradient(#c8d6e6,#8f6e56 50%,#7d8f5a);"></i><i style="position:absolute;left:46.6%;top:11.0%;width:47.4%;height:42.5%;background:linear-gradient(#b4d0ee 0%,#cfdfee 30%,#8f887c 50%,#7a7468 68%,#a08a7c 82%,#8a6a5a 100%);"></i><i style="position:absolute;left:76.0%;top:16.0%;width:18.0%;height:30.0%;background:linear-gradient(#3f5a2c,#2c4420);border-radius:40% 0 0 30%"></i><i style="position:absolute;left:56.0%;top:22.0%;width:12.0%;height:22.0%;background:#8a8278;"></i><i style="position:absolute;left:4.6%;top:56.6%;width:89.4%;height:31.0%;background:linear-gradient(#2f7ad2 0%,#4a90da 35%,#8fbde8 55%,#d9e2ea 66%,#8aa2ba 76%,#4a7eb4 88%,#3a6ea6 100%);"></i></div><div class="thl" style="left:240.5px">2</div><div class="thl" style="left:284.5px">3</div><div class="th" style="left:312px"><i style="position:absolute;left:49.6%;top:0.0%;width:0.9%;height:100.0%;background:#8f8a80;"></i><i style="position:absolute;left:6.0%;top:10.0%;width:36.0%;height:1.6%;background:#d8d1c3;"></i><i style="position:absolute;left:6.0%;top:15.2%;width:36.0%;height:1.6%;background:#d8d1c3;"></i><i style="position:absolute;left:6.0%;top:20.4%;width:36.0%;height:1.6%;background:#d8d1c3;"></i><i style="position:absolute;left:6.0%;top:25.6%;width:36.0%;height:1.6%;background:#d8d1c3;"></i><i style="position:absolute;left:6.0%;top:30.8%;width:36.0%;height:1.6%;background:#d8d1c3;"></i><i style="position:absolute;left:6.0%;top:36.0%;width:36.0%;height:1.6%;background:#d8d1c3;"></i><i style="position:absolute;left:6.0%;top:41.2%;width:36.0%;height:1.6%;background:#d8d1c3;"></i><i style="position:absolute;left:4.6%;top:47.7%;width:40.5%;height:43.8%;background:linear-gradient(#6a6e9e 0%,#9a8eb4 35%,#d8b0b0 55%,#3a3550 62%,#6a6a98 72%,#545a8a 100%);"></i><i style="position:absolute;left:58.0%;top:9.0%;width:22.0%;height:2.4%;background:#8c8577;"></i><i style="position:absolute;left:56.0%;top:18.0%;width:36.0%;height:1.6%;background:#d8d1c3;"></i><i style="position:absolute;left:56.0%;top:23.2%;width:36.0%;height:1.6%;background:#d8d1c3;"></i><i style="position:absolute;left:56.0%;top:28.4%;width:36.0%;height:1.6%;background:#d8d1c3;"></i><i style="position:absolute;left:56.0%;top:33.6%;width:36.0%;height:1.6%;background:#d8d1c3;"></i><i style="position:absolute;left:56.0%;top:38.8%;width:36.0%;height:1.6%;background:#d8d1c3;"></i><i style="position:absolute;left:56.0%;top:44.0%;width:36.0%;height:1.6%;background:#d8d1c3;"></i><i style="position:absolute;left:54.6%;top:47.7%;width:23.0%;height:43.8%;background:linear-gradient(#7a5a9a 0%,#b878a0 40%,#e0a0a0 58%,#5a3a5a 66%,#2a2038 100%);"></i><i style="position:absolute;left:63.0%;top:62.0%;width:6.0%;height:22.0%;background:#1e1628;"></i><i style="position:absolute;left:81.0%;top:52.0%;width:13.0%;height:1.6%;background:#d8d1c3;"></i><i style="position:absolute;left:81.0%;top:59.0%;width:13.0%;height:1.6%;background:#d8d1c3;"></i><i style="position:absolute;left:81.0%;top:66.0%;width:13.0%;height:1.6%;background:#d8d1c3;"></i><i style="position:absolute;left:81.0%;top:73.0%;width:13.0%;height:1.6%;background:#d8d1c3;"></i><i style="position:absolute;left:81.0%;top:80.0%;width:13.0%;height:1.6%;background:#d8d1c3;"></i></div><div class="thl" style="left:328.5px">4</div><div class="thl" style="left:372.5px">5</div><div class="th" style="left:400px"><i style="position:absolute;left:5.0%;top:7.0%;width:89.0%;height:80.6%;background:linear-gradient(#0c2896 0%,#1440b8 35%,#1c4cc4 60%,#3a5ab0 74%,#b89a5a 80%,#24306a 86%,#101c4c 100%);"></i><i style="position:absolute;left:10.0%;top:38.0%;width:8.0%;height:40.0%;background:linear-gradient(#d04aa0,#f0d060);"></i><i style="position:absolute;left:20.0%;top:46.0%;width:7.0%;height:32.0%;background:linear-gradient(#e8e8f0,#f0b040);"></i><i style="position:absolute;left:30.0%;top:56.0%;width:10.0%;height:22.0%;background:#d8b060;"></i><i style="position:absolute;left:62.0%;top:48.0%;width:7.0%;height:30.0%;background:linear-gradient(#e06a3a,#f0d070);"></i><i style="position:absolute;left:72.0%;top:54.0%;width:9.0%;height:24.0%;background:linear-gradient(#60b0e0,#f0c050);"></i><i style="position:absolute;left:84.0%;top:46.0%;width:6.0%;height:32.0%;background:linear-gradient(#e04a6a,#f0d060);"></i><i style="position:absolute;left:5.0%;top:8.0%;width:3.0%;height:5.0%;background:#d02a4a;border-radius:50%"></i><i style="position:absolute;left:49.6%;top:0.0%;width:0.9%;height:100.0%;background:#8f8a80;"></i></div><div class="thl" style="left:416.5px">6</div><div class="thl" style="left:460.5px">7</div><div class="th" style="left:488px"><i style="position:absolute;left:49.6%;top:0.0%;width:0.9%;height:100.0%;background:#8f8a80;"></i><i style="position:absolute;left:4.6%;top:7.0%;width:29.0%;height:53.0%;background:linear-gradient(#cda876 0%,#bd8e56 32%,#8e5a2c 52%,#3a2414 60%,#2a1a10 80%,#4a3018 100%);"></i><i style="position:absolute;left:12.0%;top:38.0%;width:14.0%;height:14.0%;background:#2a1a10;"></i><i style="position:absolute;left:6.0%;top:66.0%;width:16.0%;height:2.2%;background:#8c8577;"></i><i style="position:absolute;left:6.0%;top:73.0%;width:30.0%;height:1.6%;background:#d8d1c3;"></i><i style="position:absolute;left:6.0%;top:78.0%;width:30.0%;height:1.6%;background:#d8d1c3;"></i><i style="position:absolute;left:6.0%;top:83.0%;width:30.0%;height:1.6%;background:#d8d1c3;"></i><i style="position:absolute;left:6.0%;top:88.0%;width:30.0%;height:1.6%;background:#d8d1c3;"></i><i style="position:absolute;left:39.0%;top:40.0%;width:1.2%;height:14.0%;background:#c9a090;"></i><i style="position:absolute;left:59.0%;top:9.0%;width:18.0%;height:2.2%;background:#8c8577;"></i><i style="position:absolute;left:58.0%;top:17.0%;width:30.0%;height:1.6%;background:#d8d1c3;"></i><i style="position:absolute;left:58.0%;top:22.0%;width:30.0%;height:1.6%;background:#d8d1c3;"></i><i style="position:absolute;left:58.0%;top:27.0%;width:30.0%;height:1.6%;background:#d8d1c3;"></i><i style="position:absolute;left:58.0%;top:32.0%;width:30.0%;height:1.6%;background:#d8d1c3;"></i><i style="position:absolute;left:58.0%;top:38.0%;width:29.6%;height:53.5%;background:linear-gradient(#f1ecbc 0%,#ebe4a6 45%,#cfc682 60%,#4a4828 68%,#34341e 85%,#55532e 100%);"></i><i style="position:absolute;left:70.0%;top:58.0%;width:9.0%;height:12.0%;background:#3a3820;"></i><i style="position:absolute;left:92.0%;top:40.0%;width:1.2%;height:14.0%;background:#c9a090;"></i></div><div class="thl" style="left:504.5px">8</div><div class="thl" style="left:548.5px">9</div><div class="th" style="left:576px"><i style="position:absolute;left:4.9%;top:7.0%;width:44.6%;height:47.0%;background:linear-gradient(#2c3454 0%,#1e1c2c 30%,#2a2026 48%,#c9904a 60%,#8a5a30 68%,#2a1e1a 80%,#14121a 100%);"></i><i style="position:absolute;left:51.5%;top:7.0%;width:42.3%;height:47.0%;background:linear-gradient(#241a38 0%,#1c1230 35%,#5a2a6a 52%,#d8a0d0 58%,#3a1c4a 66%,#140e22 100%);"></i><i style="position:absolute;left:4.9%;top:57.0%;width:50.0%;height:34.5%;background:linear-gradient(#8fb4e4 0%,#b9d2ee 40%,#e6eef4 62%,#5a6a6a 78%,#2e3a34 100%);"></i><i style="position:absolute;left:12.0%;top:60.0%;width:5.0%;height:28.0%;background:#34404c;"></i><i style="position:absolute;left:55.5%;top:53.0%;width:3.6%;height:6.0%;background:#d8284a;border-radius:50%"></i><i style="position:absolute;left:65.0%;top:62.0%;width:18.0%;height:2.2%;background:#8c8577;"></i><i style="position:absolute;left:64.0%;top:70.0%;width:30.0%;height:1.6%;background:#d8d1c3;"></i><i style="position:absolute;left:64.0%;top:75.0%;width:30.0%;height:1.6%;background:#d8d1c3;"></i><i style="position:absolute;left:64.0%;top:80.0%;width:30.0%;height:1.6%;background:#d8d1c3;"></i><i style="position:absolute;left:64.0%;top:85.0%;width:30.0%;height:1.6%;background:#d8d1c3;"></i><i style="position:absolute;left:49.6%;top:0.0%;width:0.9%;height:100.0%;background:#8f8a80;"></i></div><div class="thl" style="left:592.5px">10</div><div class="thl" style="left:636.5px">11</div><div class="th" style="left:664px"><i style="position:absolute;left:49.6%;top:0.0%;width:0.9%;height:100.0%;background:#8f8a80;"></i><i style="position:absolute;left:4.4%;top:7.0%;width:44.6%;height:80.6%;background:linear-gradient(#a87664 0%,#ad7c68 45%,#b48a72 62%,#c9a884 70%,#d2b690 84%,#b89a78 100%);"></i><i style="position:absolute;left:32.0%;top:72.0%;width:10.0%;height:2.5%;background:#5a4030;"></i><i style="position:absolute;left:8.0%;top:14.0%;width:3.0%;height:1.6%;background:#e8d8c8;"></i><i style="position:absolute;left:8.0%;top:18.0%;width:3.0%;height:1.6%;background:#e8d8c8;"></i><i style="position:absolute;left:8.0%;top:22.0%;width:3.0%;height:1.6%;background:#e8d8c8;"></i><i style="position:absolute;left:8.0%;top:26.0%;width:3.0%;height:1.6%;background:#e8d8c8;"></i><i style="position:absolute;left:8.0%;top:30.0%;width:3.0%;height:1.6%;background:#e8d8c8;"></i><i style="position:absolute;left:8.0%;top:34.0%;width:3.0%;height:1.6%;background:#e8d8c8;"></i><i style="position:absolute;left:8.0%;top:38.0%;width:3.0%;height:1.6%;background:#e8d8c8;"></i><i style="position:absolute;left:8.0%;top:42.0%;width:3.0%;height:1.6%;background:#e8d8c8;"></i><i style="position:absolute;left:78.0%;top:90.0%;width:14.0%;height:1.6%;background:#c9c2b4;"></i></div><div class="thl" style="left:680.5px">12</div><div class="thl" style="left:724.5px">封3</div></div>
<div id="panel"><div class="hd"><svg class="abs" style="left:43px;top:7px" width="11" height="11" viewBox="0 0 11 11"><path d="M1.500 1.500 L9.500 9.500 M9.500 1.500 L1.500 9.500" stroke="#fff" stroke-width="1.500"/></svg></div>
<svg class="abs" style="left:18px;top:33px" width="24" height="26" viewBox="0 0 24 26"><path d="M1.500 1.500 H15.500 L22.500 8.500 V24.500 H1.500 Z" fill="none" stroke="#333" stroke-width="1.800" stroke-linejoin="round"/><path d="M15.500 1.500 V8.500 H22.500" fill="none" stroke="#333" stroke-width="1.500"/><path d="M7 15.500 H17 M12 10.500 V20.500" stroke="#333" stroke-width="1.800"/></svg>
<div class="pi" style="top:64px">加页</div>
<svg class="abs" style="left:18px;top:92px" width="24" height="26" viewBox="0 0 24 26"><path d="M1.500 1.500 H15.500 L22.500 8.500 V24.500 H1.500 Z" fill="none" stroke="#333" stroke-width="1.800" stroke-linejoin="round"/><path d="M15.500 1.500 V8.500 H22.500" fill="none" stroke="#333" stroke-width="1.500"/><path d="M7 15.500 H17" stroke="#333" stroke-width="1.800"/></svg>
<div class="pi" style="top:123px">删页</div>
<svg class="abs" style="left:17px;top:151px" width="26" height="26" viewBox="0 0 26 26"><circle cx="12" cy="11.500" r="9.500" fill="none" stroke="#333" stroke-width="1.800"/><path d="M7 11.500 H17 M12 6.500 V16.500" stroke="#333" stroke-width="1.800"/><path d="M18.500 19 L23 24" stroke="#333" stroke-width="1.600"/></svg>
<div class="pi" style="top:182px">放大</div>
<svg class="abs" style="left:17px;top:210px" width="26" height="26" viewBox="0 0 26 26"><circle cx="12" cy="11.500" r="9.500" fill="none" stroke="#333" stroke-width="1.800"/><path d="M7 11.500 H17" stroke="#333" stroke-width="1.800"/><path d="M18.500 19 L23 24" stroke="#333" stroke-width="1.600"/></svg>
<div class="pi" style="top:241px">缩小</div>
<svg class="abs" style="left:17px;top:270px" width="26" height="24" viewBox="0 0 26 24"><path d="M13 4 C10 1.500 5 1.500 2 3 V20.500 C5 19 10 19 13 21.500 C16 19 21 19 24 20.500 V3 C21 1.500 16 1.500 13 4 Z M13 4 V21.500" fill="none" stroke="#333" stroke-width="1.800" stroke-linejoin="round"/></svg>
<div class="pi" style="top:300px">预览</div>
<svg class="abs" style="left:16px;top:329px" width="28" height="24" viewBox="0 0 28 24"><path d="M10.500 2 C15.500 2 19 5 19 8.800 C19 12.600 15.500 15.500 10.500 15.500 C9.500 15.500 8.500 15.400 7.600 15.100 L4 17 L4.800 13.600 C3 12.400 2 10.700 2 8.800 C2 5 5.500 2 10.500 2 Z" fill="#fff" stroke="#333" stroke-width="1.600"/><path d="M18.500 9.500 C22.500 9.500 26 12 26 15.300 C26 17 25.100 18.400 23.600 19.500 L24.300 22.500 L21.200 20.800 C20.400 21 19.500 21.200 18.500 21.200 C14.400 21.200 11.200 18.600 11.200 15.300 C11.200 12 14.400 9.500 18.500 9.500 Z" fill="#fff" stroke="#333" stroke-width="1.600"/><circle cx="7.500" cy="7.500" r="1.100" fill="#333"/><circle cx="13" cy="7.500" r="1.100" fill="#333"/><circle cx="16" cy="14" r="1" fill="#333"/><circle cx="21" cy="14" r="1" fill="#333"/></svg>
<div class="pi" style="top:359px">分享</div>
</div>

</body></html>
